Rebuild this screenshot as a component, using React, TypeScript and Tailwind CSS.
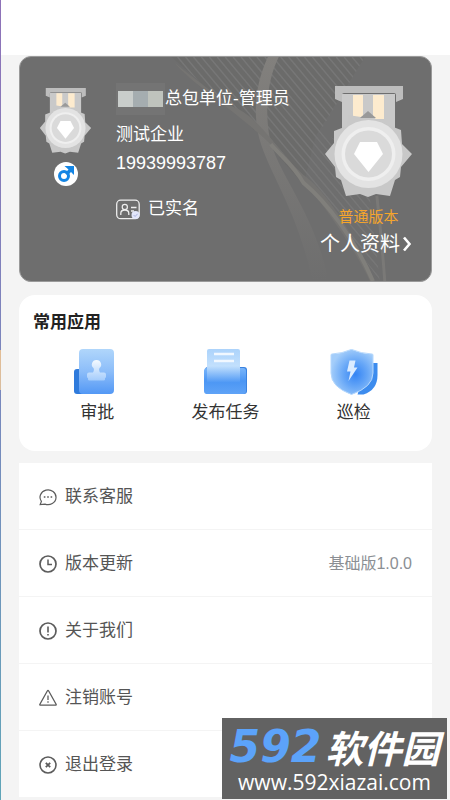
import type { ReactNode } from "react";

type MenuItem = {
  label: string;
  icon: ReactNode;
  value?: string;
};

const menuItems: MenuItem[] = [
  {
    label: "联系客服",
    icon: (
      <>
        <path d="M2.4 13.4A8 7.4 0 1 1 6 16.1L1.2 16.6z" strokeWidth="1.2" />
        <path d="M4.8 9h1.6M8.2 9h1.6M11.6 9h1.6" strokeWidth="1.7" />
      </>
    ),
  },
  {
    label: "版本更新",
    value: "基础版1.0.0",
    icon: (
      <>
        <circle cx="9" cy="9" r="8" strokeWidth="1.7" />
        <path d="M9 4.6V9.4H13" strokeWidth="1.5" />
      </>
    ),
  },
  {
    label: "关于我们",
    icon: (
      <>
        <circle cx="9" cy="9" r="8" strokeWidth="1.7" />
        <path d="M9 4.5V10.4M9 11.9V13.6" strokeWidth="1.6" />
      </>
    ),
  },
  {
    label: "注销账号",
    icon: (
      <>
        <path
          d="M8.3 2 .9 15.2q-.4.9.6.9h15q1 0 .6-.9L9.7 2q-.7-1-1.4 0z"
          strokeWidth="1.3"
        />
        <path d="M9 6.5V11M9 12.3V13.7" strokeWidth="1.3" />
      </>
    ),
  },
  {
    label: "退出登录",
    icon: (
      <>
        <circle cx="9" cy="9" r="8" strokeWidth="1.6" />
        <path d="M6.8 6.8l4.4 4.4M11.2 6.8l-4.4 4.4" strokeWidth="1.8" />
      </>
    ),
  },
];

function Medal({ className }: { className: string }) {
  return (
    <svg aria-hidden="true" className={className} viewBox="0 0 87 112">
      <path d="M17 8h53v42H17z" fill="#c9c9c9" />
      <path d="M28 9h10v24H28zM48 9h11v24H48z" fill="#fdebce" />
      <path d="M10 0h68v13l-7 3V9q0-2-2-2H19q-2 0-2 2v7l-7-3z" fill="#bdbdbd" />
      <path
        d="M43 26l10 9 23 9 1 14 10 10-11 13-1 10-5 3-5 16-14-2-8 3-8-3-14 2-5-16-5-3-1-10L0 68l9-11V45l13-5 1-11 13 2z"
        fill="#c8c8c8"
      />
      <path d="M35 32l8-7 8 7z" fill="#999" />
      <circle cx="43.5" cy="68" fill="#e3e3e3" r="34" />
      <circle cx="43.5" cy="68" fill="#efefef" r="27" />
      <circle cx="43.5" cy="68" fill="#dadada" r="23.5" />
      <path d="M35 56h17l6 12-14.5 18L29 68z" fill="#fff" />
    </svg>
  );
}

function CardPattern() {
  const lines = Array.from({ length: 44 }, (_, i) => 20 + i * 8);

  return (
    <svg
      aria-hidden="true"
      className="absolute inset-y-0 right-0 h-full"
      fill="none"
      viewBox="0 0 412 226"
    >
      <defs>
        <clipPath id="weave">
          <path d="M150 0H345L300 75 345 100 360 226 320 169 283 129 240 79z" />
        </clipPath>
        <linearGradient id="ribbon" x1="0" x2="0" y1="0" y2="1">
          <stop offset="0" stopColor="#82807d" />
          <stop offset="1" stopColor="#6e6e6e" />
        </linearGradient>
      </defs>
      <path d="M345 0L295 80 283 129 240 79 150 0z" fill="#6b6b6a" />
      <g clipPath="url(#weave)" stroke="#777" strokeWidth="1.5">
        {lines.map((x) => (
          <path d={`M${x} 0l190 226`} key={x} />
        ))}
      </g>
      <path
        d="M247 0C236 24 232 50 237 76C244 112 276 150 292 226H308C296 160 256 116 249 82C243 50 248 20 258 0z"
        fill="url(#ribbon)"
      />
      <path
        d="M153 6C170 26 205 48 240 79C265 100 322 168 350 226H355C330 170 300 130 283 119C250 88 240 60 207 48z"
        fill="#757472"
      />
      <path d="M250 88C262 102 272 108 283 127C306 146 335 184 353 226" stroke="#807f7b" strokeWidth="4" />
      <path d="M357 140Q362 184 365 226" stroke="#7a7977" strokeWidth="3" />
    </svg>
  );
}

function StampIcon() {
  return (
    <svg aria-hidden="true" className="h-[46px] w-12" viewBox="0 0 48 46">
      <defs>
        <linearGradient id="stamp-bg" x1="0" x2="0" y1="0" y2="1">
          <stop offset="0" stopColor="#b0d6fb" />
          <stop offset=".5" stopColor="#8cbdf9" />
          <stop offset="1" stopColor="#5398f5" />
        </linearGradient>
        <linearGradient id="stamp-fg" x1="0" x2="0" y1="0" y2="1">
          <stop offset="0" stopColor="#f4faff" />
          <stop offset="1" stopColor="#a4ccfc" />
        </linearGradient>
      </defs>
      <rect fill="#2f7bdc" height="25" rx="3" width="12" x="1" y="20" />
      <rect fill="url(#stamp-bg)" height="45" rx="4" width="35" x="6" y="0" />
      <path
        d="M23.5 11a4.500 4.500 0 0 1 3 8c-.8 1-.5 3 .5 4.500h4q2 0 2 2v2q0 1.500-1 1.500v1.500q0 1-1.500 1h-14q-1.500 0-1.500-1V29q-1 0-1-1.500v-2q0-2 2-2h4c1-1.500 1.300-3.500.5-4.500a4.500 4.500 0 0 1 3-8z"
        fill="url(#stamp-fg)"
      />
    </svg>
  );
}

function FolderIcon() {
  return (
    <svg aria-hidden="true" className="h-[46px] w-12" viewBox="0 0 48 46">
      <defs>
        <linearGradient id="folder-bg" x1="0" x2="0" y1="0" y2="1">
          <stop offset="0" stopColor="#79b5fa" />
          <stop offset=".5" stopColor="#4b96f4" />
          <stop offset="1" stopColor="#5fa3f7" />
        </linearGradient>
        <linearGradient id="folder-page" x1="0" x2="0" y1="0" y2="1">
          <stop offset="0" stopColor="#acd3fb" />
          <stop offset=".5" stopColor="#c2e0fd" />
          <stop offset="1" stopColor="#4b96f4" />
        </linearGradient>
      </defs>
      <rect fill="#3a82e0" height="27" rx="3" width="42" x="4" y="18" />
      <path d="M6 19h6v3h26v-3h4q3 0 3 3v20q0 3-3 3H6q-3 0-3-3V22q0-3 3-3z" fill="url(#folder-bg)" />
      <path d="M8 0h29q2 0 2 2v32H6V2q0-2 2-2z" fill="url(#folder-page)" />
      <path d="M13 5h20M13 12h20" stroke="#f1f8ff" strokeWidth="2.5" />
    </svg>
  );
}

function ShieldIcon() {
  return (
    <svg aria-hidden="true" className="h-[46px] w-12" viewBox="0 0 48 46">
      <defs>
        <radialGradient cx=".58" cy=".55" id="shield-bg" r=".58">
          <stop offset="0" stopColor="#3484f4" />
          <stop offset=".5" stopColor="#67a7f7" />
          <stop offset="1" stopColor="#a3cdfa" />
        </radialGradient>
      </defs>
      <path d="M38 14h9.500v12q0 15-14 19.500h-6z" fill="#3d8cee" />
      <path
        d="M21.500.4Q31 4.500 42 5q1 0 1 1v18q0 14-21.500 21.500Q1 38 1 24V6q0-1 1-1 10-.5 19.500-4.600z"
        fill="url(#shield-bg)"
        stroke="#b5d8fd"
      />
      <path d="M19.500 11.500h6l-1.500 7h3.500L18.500 32l2-9.500H17z" fill="#dcecff" />
    </svg>
  );
}

const apps = [
  { label: "审批", icon: <StampIcon /> },
  { label: "发布任务", icon: <FolderIcon /> },
  { label: "巡检", icon: <ShieldIcon /> },
];

function ProfileCard() {
  return (
    <section className="relative flex h-[226px] overflow-hidden rounded-xl border border-[#9a9a9a] bg-[#6e6e6e] px-[19px] text-white">
      <CardPattern />
      <div className="relative flex w-[53px] flex-col items-center pt-[31px]">
        <Medal className="h-[66px] w-[53px]" />
        <span className="mt-2 flex size-6 items-center justify-center rounded-full bg-white">
          <svg aria-label="男" className="size-4" fill="none" role="img" viewBox="0 0 16 16">
            <circle cx="6" cy="10" r="4.5" stroke="#1485e4" strokeWidth="3" />
            <path d="M6.500 0H16v9l-3-3-3.500 3.500L7 7l3.500-3.500z" fill="#1485e4" />
          </svg>
        </span>
      </div>

      <div className="relative ml-6 flex-1 pt-7 text-[17px] leading-7">
        <h1 className="flex h-7 items-center whitespace-nowrap">
          <span aria-hidden="true" className="flex h-8 w-[49px] items-center bg-[#747474]">
            <span className="ml-0.5 h-4 w-[15px] bg-[#c9cdcb]" />
            <span className="h-4 w-[15px] bg-[#a5adb0]" />
            <span className="h-4 w-[15px] bg-[#bfc3bd]" />
          </span>
          总包单位-管理员
        </h1>
        <p className="mt-2">测试企业</p>
        <p className="text-lg leading-7">19939993787</p>
        <p className="mt-[18px] flex items-center gap-2">
          <svg aria-hidden="true" className="h-[21px] w-6" fill="none" viewBox="0 0 24 21">
            <rect height="18.5" rx="4" stroke="#eee" strokeWidth="1.3" width="22.5" x=".7" y="1.2" />
            <circle cx="8.8" cy="8" r="2.6" stroke="#eee" strokeWidth="1.2" />
            <path d="M4.800 16v-1.500q0-3.500 4-3.500t4 3.500V16M15 8.500h5.500M15 12h3" stroke="#eee" strokeWidth="1.3" />
            <circle cx="19.5" cy="16" fill="#e3e7fb" r="4" />
            <path d="M17.600 16l1.500 1.500 2.500-2.700" stroke="#aab2dd" />
          </svg>
          已实名
        </p>
      </div>

      <div className="relative flex shrink-0 flex-col items-end pt-[29px]">
        <Medal className="h-28 w-[87px]" />
        <p className="mt-2 w-[87px] text-center text-[15px] leading-[22px] text-[#f5a52c]">
          普通版本
        </p>
        <a className="flex items-center text-xl leading-8" href="#profile">
          个人资料
          <svg aria-hidden="true" className="h-4 w-3" fill="none" viewBox="0 0 12 16">
            <path d="M4 1.500l5.500 6.500L4 14.500" stroke="#fff" strokeWidth="2.6" />
          </svg>
        </a>
      </div>
    </section>
  );
}

export default function App() {
  return (
    <div className="relative flex min-h-screen bg-[#f4f4f4] font-['Liberation_Sans','Noto_Sans_CJK_SC',sans-serif]">
      <div className="w-px bg-linear-to-b from-[#8e72b8] via-[#7888bd] to-[#5fa5b8]">
        <div className="mt-[350px] h-10 bg-linear-to-b from-[#e3bd95] to-[#d9bd9f]" />
      </div>
      <div className="min-w-0 flex-1">
        <header className="h-[55px] bg-white" />
        <main className="px-[18px] pt-px">
          <ProfileCard />

          <section className="mt-[13px] rounded-2xl bg-white px-[14px] pt-4 pb-6">
            <h2 className="text-[17px] leading-6 font-bold text-[#222]">常用应用</h2>
            <div className="mt-[14px] grid grid-cols-3">
              {apps.map((app) => (
                <button className="flex flex-col items-center" key={app.label} type="button">
                  {app.icon}
                  <span className="mt-1 text-[17px] leading-7 text-[#333]">{app.label}</span>
                </button>
              ))}
            </div>
          </section>

          <nav className="mt-3 bg-white">
            <ul className="divide-y divide-[#f4f4f4]">
              {menuItems.map((item) => (
                <li key={item.label}>
                  <a className="flex h-[66px] items-center px-5 pt-0.5 text-[17px] text-[#555]" href="#menu">
                    <svg
                      aria-hidden="true"
                      className="size-[18px]"
                      fill="none"
                      stroke="#5c5c5c"
                      viewBox="0 0 18 18"
                    >
                      {item.icon}
                    </svg>
                    <span className="ml-2">{item.label}</span>
                    {item.value && (
                      <span className="ml-auto text-base text-[#8b8f94]">{item.value}</span>
                    )}
                  </a>
                </li>
              ))}
            </ul>
          </nav>
        </main>
      </div>

      <aside className="absolute right-[3px] bottom-px flex h-[81px] w-[225px] flex-col items-center bg-[#626262] pt-2 whitespace-nowrap text-white">
        <p className="flex items-center gap-1 leading-[42px] font-bold italic">
          <span className="font-['DejaVu_Sans',sans-serif] text-[44px] text-[#5ca3fa]">592</span>
          <span className="font-['Noto_Sans_CJK_SC',sans-serif] text-[38px]">软件园</span>
        </p>
        <p className="font-['Open_Sans',sans-serif] text-[21px] leading-7 font-medium">
          www.592xiazai.com
        </p>
      </aside>
    </div>
  );
}
